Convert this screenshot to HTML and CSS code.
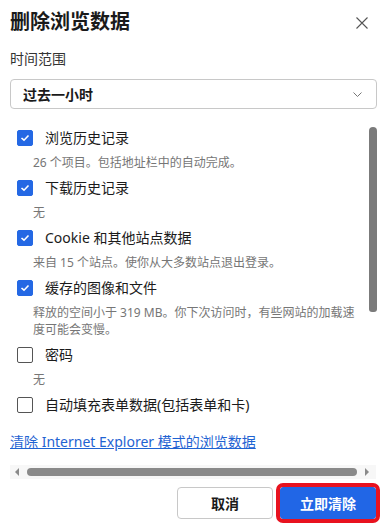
FILE: index.html
```html
<!DOCTYPE html>
<html lang="zh-CN">
<head>
<meta charset="utf-8">
<title>删除浏览数据</title>
<link rel="stylesheet" href="styles.css">
</head>
<body>
<div class="dialog">
  <div class="header">
    <h1 class="title">删除浏览数据</h1>
    <button class="close" aria-label="关闭">
      <svg width="12" height="12" viewBox="0 0 12 12"><path d="M0.5 0.5 L11.5 11.5 M11.5 0.5 L0.5 11.5" stroke="#555" stroke-width="1.1" fill="none"/></svg>
    </button>
  </div>
  <div class="field-label">时间范围</div>
  <div class="select">
    <span class="select-text">过去一小时</span>
    <svg class="chev" width="9" height="5" viewBox="0 0 9 5"><path d="M0.5 0.5 L4.5 4.5 L8.5 0.5" stroke="#777" stroke-width="1" fill="none"/></svg>
  </div>
  <div class="scroll">
    <div class="scroll-main">
      <div class="content">
        <div class="list">
          <div class="item">
            <div class="row"><span class="cb on"><svg width="10" height="8" viewBox="0 0 10 8"><path d="M1.5 4 L4 6.2 L8.5 1.5" stroke="#fff" stroke-width="1.6" fill="none"/></svg></span><span class="label">浏览历史记录</span></div>
            <div class="desc">26 个项目。包括地址栏中的自动完成。</div>
          </div>
          <div class="item">
            <div class="row"><span class="cb on"><svg width="10" height="8" viewBox="0 0 10 8"><path d="M1.5 4 L4 6.2 L8.5 1.5" stroke="#fff" stroke-width="1.6" fill="none"/></svg></span><span class="label">下载历史记录</span></div>
            <div class="desc">无</div>
          </div>
          <div class="item">
            <div class="row"><span class="cb on"><svg width="10" height="8" viewBox="0 0 10 8"><path d="M1.5 4 L4 6.2 L8.5 1.5" stroke="#fff" stroke-width="1.6" fill="none"/></svg></span><span class="label">Cookie 和其他站点数据</span></div>
            <div class="desc">来自 15 个站点。使你从大多数站点退出登录。</div>
          </div>
          <div class="item">
            <div class="row"><span class="cb on"><svg width="10" height="8" viewBox="0 0 10 8"><path d="M1.5 4 L4 6.2 L8.5 1.5" stroke="#fff" stroke-width="1.6" fill="none"/></svg></span><span class="label">缓存的图像和文件</span></div>
            <div class="desc">释放的空间小于 319 MB。你下次访问时，有些网站的加载速度可能会变慢。</div>
          </div>
          <div class="item">
            <div class="row"><span class="cb"></span><span class="label">密码</span></div>
            <div class="desc">无</div>
          </div>
          <div class="item">
            <div class="row"><span class="cb"></span><span class="label">自动填充表单数据(包括表单和卡)</span></div>
          </div>
        </div>
        <a class="link" href="#">清除 Internet Explorer 模式的浏览数据</a>
      </div>
      <div class="vbar"><div class="vthumb"></div></div>
    </div>
    <div class="hbar">
      <span class="arrow left"></span>
      <span class="hthumb"></span>
      <span class="arrow right"></span>
    </div>
  </div>
  <div class="footer">
    <button class="btn cancel">取消</button>
    <button class="btn primary">立即清除</button>
  </div>
</div>
</body>
</html>
```
FILE: styles.css
```css
html, body {
  margin: 0;
  padding: 0;
  background: #fff;
}
body {
  font-family: "Noto Sans", "Noto Sans CJK SC", sans-serif;
  color: #1b1b1b;
}
.dialog {
  width: 384px;
  height: 527px;
  box-sizing: border-box;
  padding: 8px 7px 0 10px;
  display: flex;
  flex-direction: column;
}
.header {
  display: flex;
  align-items: center;
  justify-content: space-between;
  height: 28px;
}
.title {
  margin: 0;
  font-size: 20px;
  line-height: 28px;
  font-weight: 700;
  color: #1a1a1a;
}
.close {
  border: 0;
  background: none;
  padding: 0;
  margin: 2px 9px 0 0;
  width: 12px;
  height: 12px;
  display: flex;
}
.field-label {
  margin-top: 12px;
  font-size: 14px;
  line-height: 21px;
  color: #333;
}
.select {
  margin-top: 10px;
  height: 30px;
  box-sizing: border-box;
  border: 1px solid #c8c8c8;
  border-radius: 4px;
  display: flex;
  align-items: center;
  justify-content: space-between;
  padding: 0 14px 0 12px;
}
.select-text {
  font-size: 14px;
  font-weight: 700;
  color: #1a1a1a;
}
.chev {
  display: block;
}
.scroll {
  display: flex;
  flex-direction: column;
}
.scroll-main {
  margin-top: 17px;
  display: flex;
}
.content {
  flex: 1;
  padding-left: 7px;
  padding-right: 12px;
}
.item {
  padding-bottom: 5px;
}
.row {
  display: flex;
  align-items: center;
  height: 24px;
}
.cb {
  width: 16px;
  height: 16px;
  box-sizing: border-box;
  border: 1px solid #555;
  border-radius: 2px;
  display: flex;
  align-items: center;
  justify-content: center;
  margin-right: 12px;
  flex: none;
}
.cb.on {
  background: #2468e4;
  border-color: #2468e4;
}
.label {
  font-size: 14px;
  line-height: 20px;
  color: #1b1b1b;
}
.desc {
  margin-top: 4px;
  padding-left: 16px;
  font-size: 12px;
  line-height: 17px;
  color: #767676;
}
.link {
  display: inline-block;
  margin: 10px 0 13px -7px;
  font-size: 14px;
  line-height: 20px;
  color: #1f63d2;
  text-decoration: underline;
}
.vbar {
  width: 8px;
  flex: none;
  padding-top: 1px;
}
.vthumb {
  height: 185px;
  background: #7b7b7b;
  border-radius: 4px 4px 3px 3px;
}
.hbar {
  height: 14px;
  margin-right: 1px;
  background: #f7f7f7;
  display: flex;
  align-items: center;
  padding: 0 7px 0 5px;
}
.arrow {
  width: 0;
  height: 0;
  border-top: 4px solid transparent;
  border-bottom: 4px solid transparent;
  flex: none;
}
.arrow.left {
  border-right: 4px solid #8a8a8a;
}
.arrow.right {
  border-left: 4px solid #8a8a8a;
}
.hthumb {
  flex: 1;
  height: 8px;
  background: #8a8a8a;
  border-radius: 4px;
  margin: 0 8px;
}
.footer {
  margin-top: 8px;
  display: flex;
  justify-content: flex-end;
  gap: 7px;
  padding-right: 1px;
}
.btn {
  width: 96px;
  height: 32px;
  border-radius: 4px;
  font-family: "Noto Sans", "Noto Sans CJK SC", sans-serif;
  font-size: 14px;
  font-weight: 700;
  padding: 0;
}
.cancel {
  background: #fff;
  border: 1px solid #c8c8c8;
  color: #1a1a1a;
}
.primary {
  background: #2166e6;
  border: 1px solid #2166e6;
  color: #fff;
  outline: 4px solid #e8121f;
  outline-offset: 0;
  border-radius: 3px;
}
```
